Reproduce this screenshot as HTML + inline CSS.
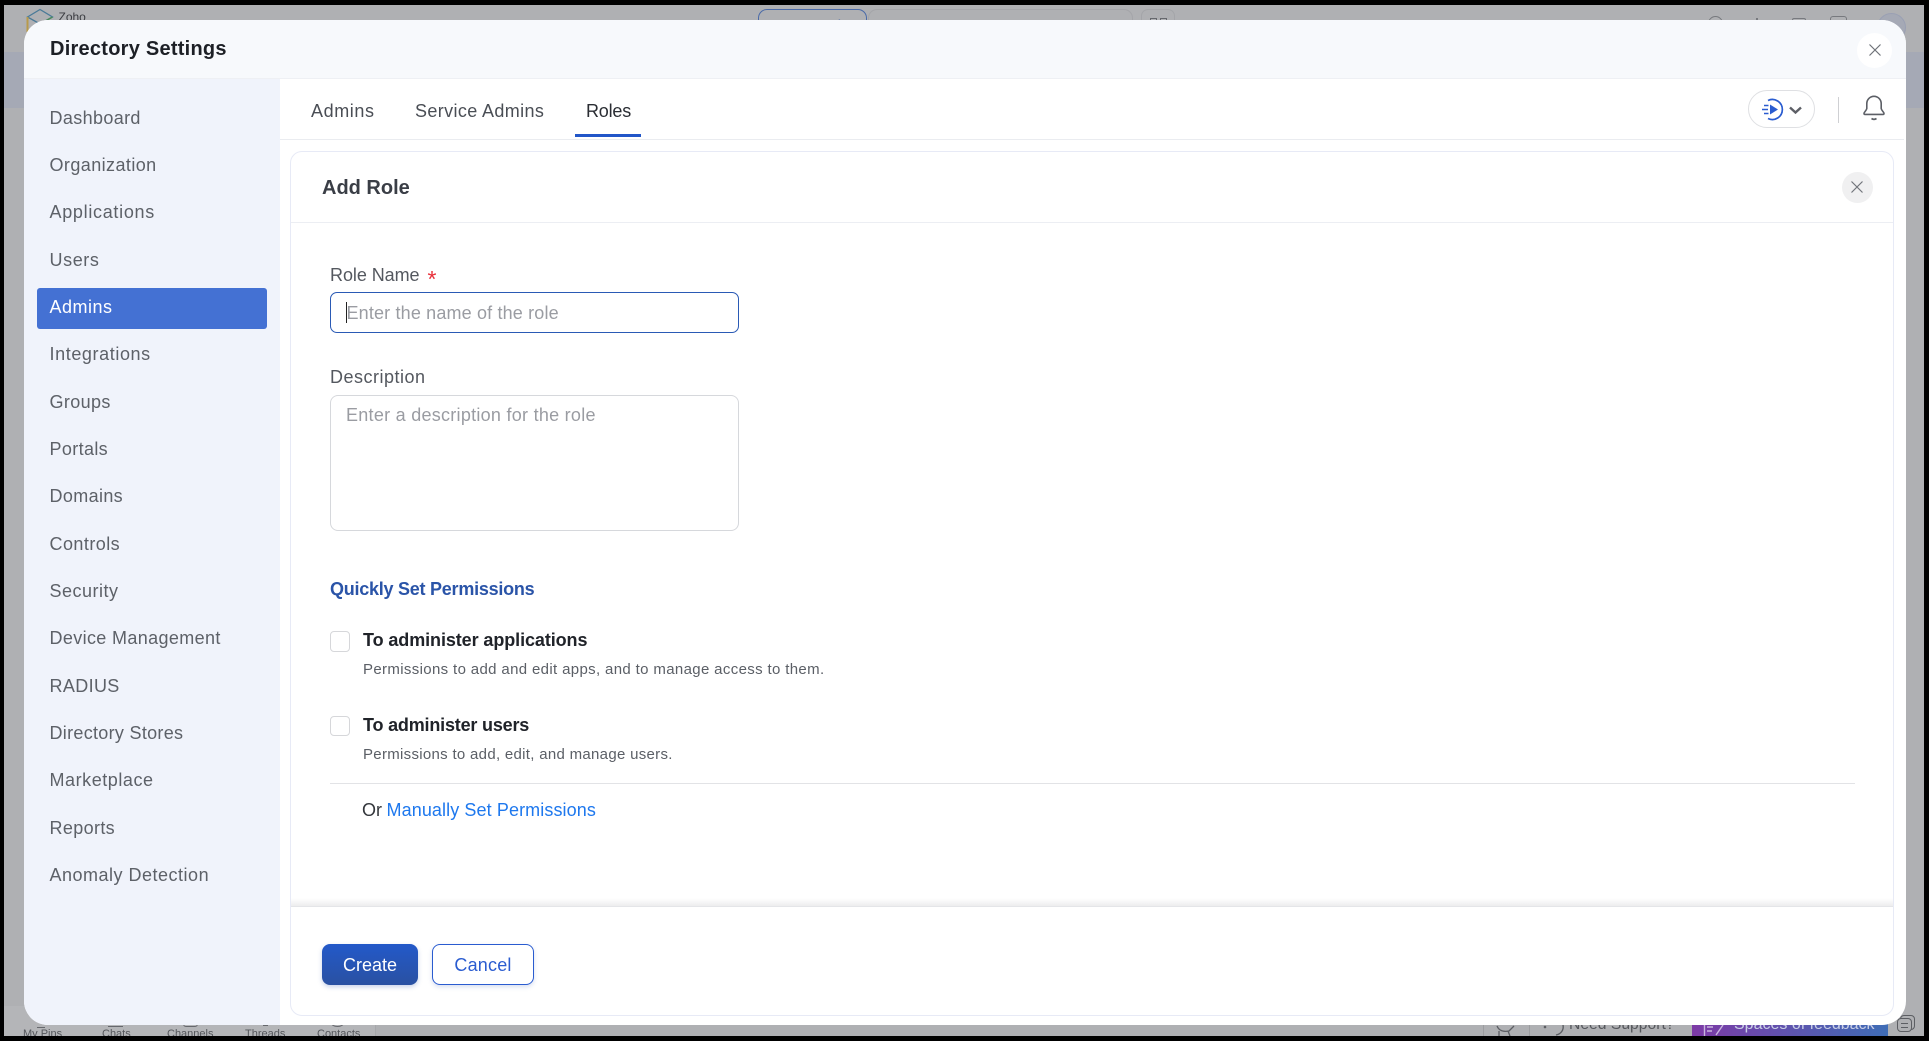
<!DOCTYPE html>
<html lang="en"><head><meta charset="utf-8"><title>Directory Settings</title>
<style>
*{box-sizing:border-box}
html,body{margin:0;padding:0;background:#000}
body{width:1929px;height:1041px;overflow:hidden;position:relative;font-family:"Liberation Sans",sans-serif}
.a{position:absolute}
.t{position:absolute;white-space:nowrap;line-height:24px;height:24px}
#bg{left:4px;top:5px;width:1920px;height:1031px;background:#afb0b3;overflow:hidden}
#modal{left:24px;top:20px;width:1882px;height:1005px;background:#fff;border-radius:24px;overflow:hidden}
.nav{font-size:18px;color:#5d6168;left:25.500px;letter-spacing:.36px}
.tab{font-size:18px;color:#4a4e55}
.lbl{font-size:18px;color:#54585f}
.ph{font-size:18px;color:#9a9ca2}
.h{font-size:18px;font-weight:bold;color:#202329;letter-spacing:-.09px}
.d{font-size:15px;color:#5b5f66;letter-spacing:.35px}
.cb{position:absolute;width:20px;height:21px;border:1px solid #d6d7da;border-radius:4px;background:#fff}
.bl{font-size:11px;color:#54565b}
</style></head><body>
<div id="bg" class="a">
  <div class="a" style="left:0;top:47px;width:1920px;height:56px;background:#a5a9b5"></div>
  <svg class="a" style="left:22px;top:3px" width="32" height="30" viewBox="0 0 32 30" fill="none"><path d="M1.500 9 L14 1.500 L26.500 9 L14 16Z" stroke="#4a7a98" stroke-width="1.300"/><path d="M1.500 9V24" stroke="#b89a4a" stroke-width="2"/><path d="M14 16L26.500 9" stroke="#4a8a5a" stroke-width="1.400"/></svg>
  <div class="t" style="left:54.500px;top:0;font-size:12px;color:#3b3d42">Zoho</div>
  <div class="a" style="left:754px;top:4px;width:109px;height:30px;border:1.500px solid #4a6aa8;border-radius:9px"></div>
  <div class="a" style="left:864px;top:4px;width:265px;height:30px;border:1px solid #a4a5a9;border-radius:9px"></div>
  <div class="a" style="left:1137px;top:4px;width:34px;height:30px;border:1px solid #a4a5a9;border-radius:7px"></div>
  <div class="t" style="left:774px;top:10px;font-size:16px;color:#4a6aa8">Personal</div>
  <div class="t" style="left:886px;top:11px;font-size:16px;color:#55575c">Organization</div>
  <div class="t" style="left:1034px;top:11px;font-size:16px;color:#55575c">Cliq</div>
  <div class="a" style="left:1146px;top:13px;width:7px;height:8px;border:1.500px solid #66686d"></div>
  <div class="a" style="left:1156px;top:13px;width:7px;height:8px;border:1.500px solid #66686d"></div>
  <div class="a" style="left:1704px;top:11px;width:15px;height:15px;border:1.500px solid #77797e;border-radius:50%"></div>
  <div class="a" style="left:1752px;top:13px;width:2px;height:14px;background:#77797e"></div>
  <div class="a" style="left:1788px;top:13px;width:14px;height:14px;border:1.500px solid #77797e;border-radius:2px"></div>
  <div class="a" style="left:1826px;top:11px;width:17px;height:16px;border:1.500px solid #77797e;border-radius:3px"></div>
  <div class="a" style="left:1873px;top:8px;width:29px;height:29px;background:#a5a9b5;border:1px solid #9aa0b3;border-radius:50%"></div>
  <div class="a" style="left:0;top:1001px;width:372px;height:30px;background:#b4b5b8;border-right:1px solid #a6a7aa"></div>
  <div class="a" style="left:33px;top:1020px;width:8px;height:3px;border-bottom:1.500px solid #66686d"></div>
  <div class="a" style="left:104px;top:1018px;width:15px;height:4px;border-bottom:1.500px solid #66686d"></div>
  <div class="a" style="left:179px;top:1016px;width:15px;height:6px;border:1.500px solid #66686d;border-radius:3px"></div>
  <div class="a" style="left:259px;top:1018px;width:5px;height:3px;border-bottom:1.500px solid #66686d"></div>
  <div class="a" style="left:327px;top:1014px;width:13px;height:8px;border:1.500px solid #66686d;border-radius:50%"></div>
  <div class="t bl" style="left:19px;top:1017px">My Pins</div>
  <div class="t bl" style="left:98px;top:1017px">Chats</div>
  <div class="t bl" style="left:163px;top:1017px">Channels</div>
  <div class="t bl" style="left:241px;top:1017px">Threads</div>
  <div class="t bl" style="left:313px;top:1017px">Contacts</div>
  <div class="a" style="left:1479px;top:1001px;width:1px;height:30px;background:#9c9da0"></div>
  <div class="a" style="left:1525px;top:1001px;width:1px;height:30px;background:#9c9da0"></div>
  <svg class="a" style="left:1490px;top:1018px" width="26" height="14" viewBox="0 0 26 14" fill="none"><path d="M3 3c2 5 7 6 12 5l5-5M5 8v5M14 8l2 5" stroke="#5c5e63" stroke-width="1.300"/></svg>
  <svg class="a" style="left:1538px;top:1018px" width="26" height="14" viewBox="0 0 26 14" fill="none"><circle cx="3" cy="4" r="1.300" fill="#5c5e63"/><path d="M21 2c1 5-2 9-7 10" stroke="#5c5e63" stroke-width="1.400"/></svg>
  <div class="t" style="left:1565px;top:1008px;font-size:15.700px;color:#55575c">Need Support?</div>
  <div class="a" style="left:1688px;top:1015px;width:196px;height:16px;background:linear-gradient(90deg,#7d3aa6,#3f6db6)"></div>
  <svg class="a" style="left:1698px;top:1016px" width="26" height="15" viewBox="0 0 26 15" fill="none"><path d="M15 1.500H2.500V15M5 6h6M5 10h5M14 14L21 4" stroke="#c9b6de" stroke-width="1.400"/></svg>
  <div class="t" style="left:1730px;top:1008px;font-size:16px;color:#c9cfe6">Spaces of feedback</div>
  <div class="a" style="left:1896px;top:1010px;width:15px;height:15px;border:1.500px solid #5c5e63;border-radius:4px"></div>
  <div class="a" style="left:1893px;top:1013px;width:15px;height:14px;border:1.500px solid #5c5e63;border-radius:4px;background:#afb0b3"></div>
  <div class="a" style="left:1897px;top:1018px;width:7px;height:5px;border-top:1.500px solid #5c5e63;border-bottom:1.500px solid #5c5e63"></div>
</div>

<div id="modal" class="a">
  <div class="a" style="left:0;top:0;width:1882px;height:59px;background:#f7f9fc;border-bottom:1px solid #eef0f4"></div>
  <div class="t" style="left:26px;top:17px;font-size:20px;font-weight:bold;color:#1d2026;letter-spacing:.25px">Directory Settings</div>
  <div class="a" style="left:1833px;top:13px;width:35px;height:35px;background:#fff;border-radius:50%"></div>
  <svg class="a" style="left:1844.500px;top:23.500px" width="12" height="12" viewBox="0 0 12 12"><path d="M.5.5l11 11M11.500.5l-11 11" stroke="#6f7278" stroke-width="1.200" fill="none"/></svg>

  <div class="a" style="left:0;top:59px;width:256px;height:946px;background:#f0f3fb"></div>
  <div class="a" style="left:13px;top:268px;width:230px;height:41px;background:#4471d3;border-radius:3px"></div>
  <div class="t nav" style="top:86px">Dashboard</div>
  <div class="t nav" style="top:133px;letter-spacing:.42px">Organization</div>
  <div class="t nav" style="top:180px;letter-spacing:.7px">Applications</div>
  <div class="t nav" style="top:228px;letter-spacing:.6px">Users</div>
  <div class="t nav" style="top:275px;color:#fff;letter-spacing:.5px">Admins</div>
  <div class="t nav" style="top:322px;letter-spacing:.6px">Integrations</div>
  <div class="t nav" style="top:370px">Groups</div>
  <div class="t nav" style="top:417px">Portals</div>
  <div class="t nav" style="top:464px">Domains</div>
  <div class="t nav" style="top:512px;letter-spacing:.45px">Controls</div>
  <div class="t nav" style="top:559px;letter-spacing:.5px">Security</div>
  <div class="t nav" style="top:606px">Device Management</div>
  <div class="t nav" style="top:654px">RADIUS</div>
  <div class="t nav" style="top:701px;letter-spacing:.3px">Directory Stores</div>
  <div class="t nav" style="top:748px;letter-spacing:.55px">Marketplace</div>
  <div class="t nav" style="top:796px">Reports</div>
  <div class="t nav" style="top:843px;letter-spacing:.5px">Anomaly Detection</div>

  <div class="t tab" style="left:287px;top:79px;letter-spacing:.6px">Admins</div>
  <div class="t tab" style="left:391px;top:79px;letter-spacing:.37px">Service Admins</div>
  <div class="t tab" style="left:562px;top:79px;color:#2a2d33;letter-spacing:-.2px">Roles</div>
  <div class="a" style="left:551px;top:114px;width:66px;height:3px;background:#2256c8"></div>
  <div class="a" style="left:256px;top:119px;width:1624px;height:1px;background:#eaecf0"></div>

  <div class="a" style="left:1724px;top:70px;width:67px;height:38px;border:1px solid #dfe0e3;border-radius:19px;background:#fff"></div>
  <svg class="a" style="left:1737px;top:77px" width="46" height="24" viewBox="0 0 46 24" fill="none">
    <path d="M7 3.500A10 10 0 1 1 7 21.500" stroke="#2a5cd0" stroke-width="1.700"/>
    <path d="M9 7.500L17 12.500 9 17.500Z" fill="#2a5cd0"/>
    <path d="M3 8.500h4.500M1 12.500h6M3 16.500h4.500" stroke="#2a5cd0" stroke-width="1.500"/>
    <path d="M29 10.500l5.500 5L40 10.500" stroke="#5d5f66" stroke-width="2.400"/>
  </svg>
  <div class="a" style="left:1814px;top:77px;width:1px;height:26px;background:#cfd0d3"></div>
  <svg class="a" style="left:1838px;top:74px" width="24" height="28" viewBox="0 0 24 28" fill="none">
    <path d="M2 19.500c0-1.500 2.300-2.500 2.800-5V9.500a7.200 7.200 0 0 1 14.400 0v5c.5 2.500 2.800 3.500 2.800 5 0 .6-.4.9-1 .9H3c-.6 0-1-.3-1-.9Z" stroke="#5c5f66" stroke-width="1.600"/>
    <path d="M9.500 24.500c1.500 1 3.500 1 5 0" stroke="#5c5f66" stroke-width="1.700"/>
  </svg>

  <div class="a" style="left:266px;top:131px;width:1604px;height:865px;border:1px solid #e7eaf6;border-radius:12px;background:#fff"></div>
  <div class="t" style="left:298px;top:156px;font-size:20px;font-weight:bold;color:#3a3e46">Add Role</div>
  <div class="a" style="left:267px;top:202px;width:1602px;height:1px;background:#eceef3"></div>
  <div class="a" style="left:1817.500px;top:151.500px;width:31px;height:31px;background:#f0f0f1;border-radius:50%"></div>
  <svg class="a" style="left:1827px;top:161px" width="12" height="12" viewBox="0 0 12 12"><path d="M.5.5l11 11M11.500.5l-11 11" stroke="#72757b" stroke-width="1.200" fill="none"/></svg>

  <div class="t lbl" style="left:306px;top:243px;letter-spacing:-.06px">Role Name</div>
  <div class="t" style="left:403.500px;top:247px;font-size:23px;color:#e8303a">*</div>
  <div class="a" style="left:306px;top:272px;width:409px;height:41px;border:1.500px solid #2a5ab5;border-radius:7px;background:#fff"></div>
  <div class="a" style="left:322px;top:282px;width:1px;height:21px;background:#222"></div>
  <div class="t ph" style="left:322.500px;top:281px;letter-spacing:.16px">Enter the name of the role</div>

  <div class="t lbl" style="left:306px;top:345px;letter-spacing:.5px">Description</div>
  <div class="a" style="left:306px;top:375px;width:409px;height:136px;border:1px solid #d6d8dc;border-radius:8px;background:#fff"></div>
  <div class="t ph" style="left:322px;top:383px;letter-spacing:.27px">Enter a description for the role</div>

  <div class="t" style="left:306px;top:557px;font-size:18px;font-weight:bold;color:#2a54a8;letter-spacing:-.25px">Quickly Set Permissions</div>

  <div class="cb" style="left:306px;top:611px"></div>
  <div class="t h" style="left:339px;top:608px">To administer applications</div>
  <div class="t d" style="left:339px;top:638px">Permissions to add and edit apps, and to manage access to them.</div>

  <div class="cb" style="left:306px;top:696px;height:20px"></div>
  <div class="t h" style="left:339px;top:693px;letter-spacing:-.19px">To administer users</div>
  <div class="t d" style="left:339px;top:723px;letter-spacing:.3px">Permissions to add, edit, and manage users.</div>

  <div class="a" style="left:306px;top:763px;width:1525px;height:1px;background:#e2e3e6"></div>
  <div class="t" style="left:338px;top:778px;font-size:18px;color:#33363b">Or <span style="color:#1e78ee;margin-left:-.5px;letter-spacing:.1px">Manually Set Permissions</span></div>

  <div class="a" style="left:267px;top:878px;width:1602px;height:8px;background:linear-gradient(180deg,#fff,#ededee)"></div>
  <div class="a" style="left:267px;top:886px;width:1602px;height:1px;background:#e4e5e8"></div>

  <div class="a" style="left:298px;top:924px;width:96px;height:41px;border-radius:8px;background:linear-gradient(180deg,#2359c9,#2a51a2);box-shadow:0 2px 5px rgba(40,80,170,.25);color:#fff;font-size:18px;line-height:42px;text-align:center">Create</div>
  <div class="a" style="left:408px;top:924px;width:102px;height:41px;border-radius:8px;background:#fff;border:1.500px solid #2a5cd0;box-shadow:0 2px 5px rgba(40,80,170,.18);color:#2a5cd0;font-size:18px;line-height:40px;text-align:center;letter-spacing:.2px">Cancel</div>
</div>
</body></html>
